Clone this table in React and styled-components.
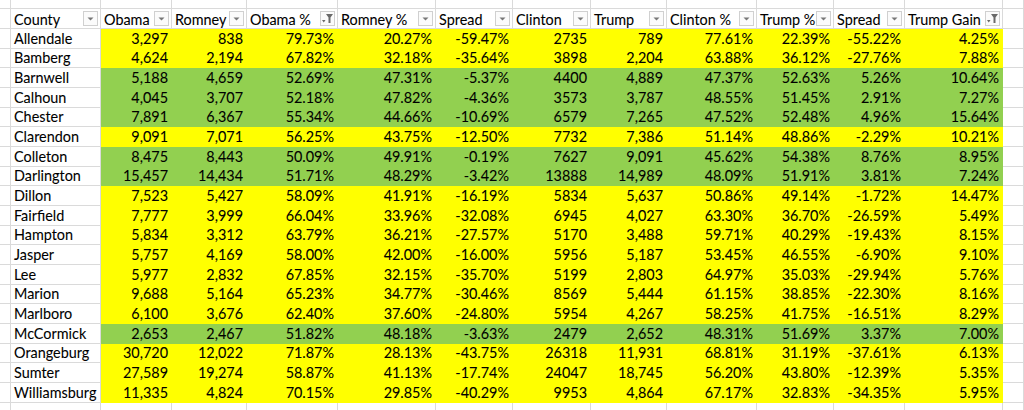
import React from 'react'
import styled, { createGlobalStyle } from 'styled-components'

const GlobalStyle = createGlobalStyle`
  html, body {
    margin: 0;
    padding: 0;
    background: #ffffff;
    overflow: hidden;
  }
  body {
    font-family: Lato, "Liberation Sans", sans-serif;
    color: #000000;
  }
`

const YELLOW = '#ffff00'
const GREEN = '#92d050'
const LINE = '#dadada'

const COLUMNS = '11px 90px 71px 75px 91px 98px 77px 78px 76px 90px 77px 71px 98px 1fr'

const headers = [
  { label: 'County' },
  { label: 'Obama' },
  { label: 'Romney' },
  { label: 'Obama %', filtered: true },
  { label: 'Romney %' },
  { label: 'Spread' },
  { label: 'Clinton' },
  { label: 'Trump' },
  { label: 'Clinton %' },
  { label: 'Trump %' },
  { label: 'Spread' },
  { label: 'Trump Gain', filtered: true },
]

// county, obama, romney, obama %, romney %, spread, clinton, trump, clinton %, trump %, spread, gain, fill
const rows = [
  ['Allendale', '3,297', '838', '79.73%', '20.27%', '-59.47%', '2735', '789', '77.61%', '22.39%', '-55.22%', '4.25%', 'y'],
  ['Bamberg', '4,624', '2,194', '67.82%', '32.18%', '-35.64%', '3898', '2,204', '63.88%', '36.12%', '-27.76%', '7.88%', 'y'],
  ['Barnwell', '5,188', '4,659', '52.69%', '47.31%', '-5.37%', '4400', '4,889', '47.37%', '52.63%', '5.26%', '10.64%', 'g'],
  ['Calhoun', '4,045', '3,707', '52.18%', '47.82%', '-4.36%', '3573', '3,787', '48.55%', '51.45%', '2.91%', '7.27%', 'g'],
  ['Chester', '7,891', '6,367', '55.34%', '44.66%', '-10.69%', '6579', '7,265', '47.52%', '52.48%', '4.96%', '15.64%', 'g'],
  ['Clarendon', '9,091', '7,071', '56.25%', '43.75%', '-12.50%', '7732', '7,386', '51.14%', '48.86%', '-2.29%', '10.21%', 'y'],
  ['Colleton', '8,475', '8,443', '50.09%', '49.91%', '-0.19%', '7627', '9,091', '45.62%', '54.38%', '8.76%', '8.95%', 'g'],
  ['Darlington', '15,457', '14,434', '51.71%', '48.29%', '-3.42%', '13888', '14,989', '48.09%', '51.91%', '3.81%', '7.24%', 'g'],
  ['Dillon', '7,523', '5,427', '58.09%', '41.91%', '-16.19%', '5834', '5,637', '50.86%', '49.14%', '-1.72%', '14.47%', 'y'],
  ['Fairfield', '7,777', '3,999', '66.04%', '33.96%', '-32.08%', '6945', '4,027', '63.30%', '36.70%', '-26.59%', '5.49%', 'y'],
  ['Hampton', '5,834', '3,312', '63.79%', '36.21%', '-27.57%', '5170', '3,488', '59.71%', '40.29%', '-19.43%', '8.15%', 'y'],
  ['Jasper', '5,757', '4,169', '58.00%', '42.00%', '-16.00%', '5956', '5,187', '53.45%', '46.55%', '-6.90%', '9.10%', 'y'],
  ['Lee', '5,977', '2,832', '67.85%', '32.15%', '-35.70%', '5199', '2,803', '64.97%', '35.03%', '-29.94%', '5.76%', 'y'],
  ['Marion', '9,688', '5,164', '65.23%', '34.77%', '-30.46%', '8569', '5,444', '61.15%', '38.85%', '-22.30%', '8.16%', 'y'],
  ['Marlboro', '6,100', '3,676', '62.40%', '37.60%', '-24.80%', '5954', '4,267', '58.25%', '41.75%', '-16.51%', '8.29%', 'y'],
  ['McCormick', '2,653', '2,467', '51.82%', '48.18%', '-3.63%', '2479', '2,652', '48.31%', '51.69%', '3.37%', '7.00%', 'g'],
  ['Orangeburg', '30,720', '12,022', '71.87%', '28.13%', '-43.75%', '26318', '11,931', '68.81%', '31.19%', '-37.61%', '6.13%', 'y'],
  ['Sumter', '27,589', '19,274', '58.87%', '41.13%', '-17.74%', '24047', '18,745', '56.20%', '43.80%', '-12.39%', '5.35%', 'y'],
  ['Williamsburg', '11,335', '4,824', '70.15%', '29.85%', '-40.29%', '9953', '4,864', '67.17%', '32.83%', '-34.35%', '5.95%', 'y'],
]

const Sheet = styled.div`
  display: flex;
  flex-direction: column;
  width: 1024px;
  height: 410px;
  overflow: hidden;
`

const Row = styled.div`
  display: grid;
  grid-template-columns: ${COLUMNS};
  height: ${(p) => p.$height};
  flex: none;
`

const Cell = styled.div`
  box-sizing: border-box;
  display: flex;
  align-items: flex-end;
  justify-content: ${(p) => (p.$right ? 'flex-end' : 'flex-start')};
  padding: 0 3px 1px 3px;
  border-right: 1px solid ${(p) => (p.$fill ? 'transparent' : LINE)};
  border-bottom: 1px solid ${(p) => (p.$fill ? 'transparent' : LINE)};
  background: ${(p) => p.$fill || '#ffffff'};
  font-size: 14.4px;
  line-height: 17px;
  -webkit-text-stroke: 0.08px #000000;
  white-space: nowrap;
  overflow: hidden;
`

const HeaderCell = styled(Cell)`
  justify-content: space-between;
  align-items: center;
  padding: 0 2px 0 3px;
`

const HeaderLabel = styled.span`
  padding-top: 1px;
`

const FilterButton = styled.span`
  box-sizing: border-box;
  flex: none;
  display: flex;
  align-items: center;
  justify-content: center;
  width: 15px;
  height: 15px;
  border: 1px solid #d0d0d0;
  background: #fbfbfb;
  -webkit-text-stroke: 0;
`

const DropArrow = () => (
  <svg width="7" height="4" viewBox="0 0 7 4">
    <path d="M0.5 0.5 H6.5 L3.5 3.5 Z" fill="#777777" />
  </svg>
)

const FunnelIcon = () => (
  <svg width="13" height="11" viewBox="0 0 13 11">
    <path d="M5 1 H12 L9.5 4.5 V10 H7.5 V4.5 Z" fill="#6a6a6a" />
    <path d="M1 7 H4.5 L2.75 9.5 Z" fill="#6a6a6a" />
  </svg>
)

const fills = { y: YELLOW, g: GREEN }

function Blank({ count }) {
  return Array.from({ length: count }, (_, i) => <Cell key={i} />)
}

export default function App() {
  return (
    <>
      <GlobalStyle />
      <Sheet>
        <Row $height="9px">
          <Blank count={14} />
        </Row>
        <Row $height="20px">
          <Cell />
          {headers.map((h, i) => (
            <HeaderCell key={i}>
              <HeaderLabel>{h.label}</HeaderLabel>
              <FilterButton>{h.filtered ? <FunnelIcon /> : <DropArrow />}</FilterButton>
            </HeaderCell>
          ))}
          <Cell />
        </Row>
        {rows.map((r) => {
          const fill = fills[r[12]]
          return (
            <Row key={r[0]} $height="19.68px">
              <Cell />
              <Cell>{r[0]}</Cell>
              {r.slice(1, 12).map((v, i) => (
                <Cell key={i} $right $fill={fill}>
                  {v}
                </Cell>
              ))}
              <Cell />
            </Row>
          )
        })}
        <Row $height="20px">
          <Blank count={14} />
        </Row>
      </Sheet>
    </>
  )
}
